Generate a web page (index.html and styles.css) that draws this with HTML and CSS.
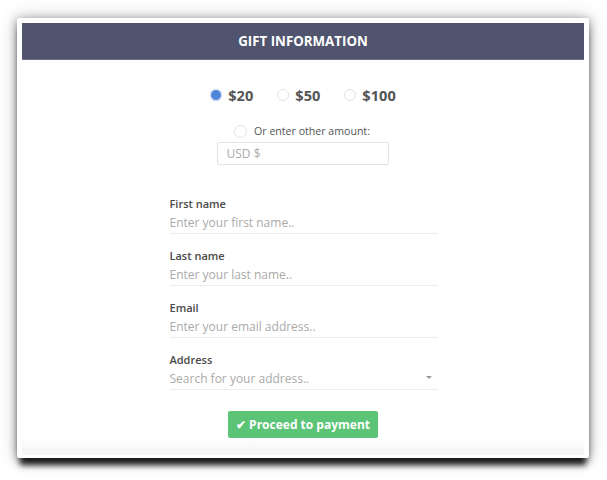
FILE: index.html
```html
<!DOCTYPE html>
<html lang="en">
<head>
  <meta charset="UTF-8" />
  <title>Gift Information</title>
  <link rel="stylesheet" href="styles.css">
</head>
<body>
  <div class="window">
    <div class="panel">
      <div class="panel-header">GIFT INFORMATION</div>

      <div class="amounts">
        <label class="amount"><span class="radio checked"></span>$20</label>
        <label class="amount"><span class="radio"></span>$50</label>
        <label class="amount"><span class="radio"></span>$100</label>
      </div>

      <label class="other"><span class="radio"></span>Or enter other amount:</label>
      <input class="other-input" type="text" placeholder="USD $" />

      <div class="fields">
        <div class="field">
          <label>First name</label>
          <input type="text" placeholder="Enter your first name.." />
        </div>
        <div class="field">
          <label>Last name</label>
          <input type="text" placeholder="Enter your last name.." />
        </div>
        <div class="field">
          <label>Email</label>
          <input type="text" placeholder="Enter your email address.." />
        </div>
        <div class="field select">
          <label>Address</label>
          <input type="text" placeholder="Search for your address.." />
          <span class="caret"></span>
        </div>
      </div>

      <div class="actions">
        <button class="pay">&#10004; Proceed to payment</button>
      </div>
    </div>
  </div>
</body>
</html>
```

FILE: styles.css
```css
html,
body {
  height: 480px;
}

body {
  margin: 0;
  padding-top: 18px;
  box-sizing: border-box;
  background: #fff;
  font-family: "Open Sans", Arial, sans-serif;
  color: #555;
}

/* window with heavy drop shadow */
.window {
  width: 562px;
  height: 432px;
  margin-left: 17px;
  padding: 5px 5px 3px;
  background: #fff;
  border-radius: 2px;
  box-shadow:
    0 10px 6px -3px rgba(0, 0, 0, 0.85),
    0 2px 10px rgba(0, 0, 0, 0.45),
    0 0 20px rgba(0, 0, 0, 0.2);
}

.panel {
  height: 100%;
  background: linear-gradient(to bottom, #fff 0, #fff 414px, #f4f4f4 100%);
  display: flex;
  flex-direction: column;
  align-items: center;
}

.panel-header {
  align-self: stretch;
  height: 37px;
  line-height: 37px;
  background: #50546e;
  border-bottom: 1px solid #6c7088;
  box-sizing: border-box;
  color: #fff;
  font-size: 13.3px;
  font-weight: 700;
  text-align: center;
}

.amounts {
  display: flex;
  gap: 24px;
  margin-top: 25px;
}

.amount {
  display: flex;
  align-items: center;
  font-size: 14.6px;
  font-weight: 700;
  color: #555;
}

.radio {
  width: 12px;
  height: 12px;
  border: 1px solid #e2e2e2;
  border-radius: 50%;
  box-sizing: border-box;
  margin-right: 6px;
  background: #fff;
}

.radio.checked {
  background: #4f86d8;
  border-color: #dfe8f6;
  box-shadow: 0 0 0 1px #eef3fa;
}

.other {
  display: flex;
  align-items: center;
  margin-top: 19px;
  margin-right: 2px;
  font-size: 10.6px;
  color: #555;
}

.other .radio {
  width: 13px;
  height: 13px;
  margin-right: 7px;
}

.other-input {
  width: 172px;
  height: 23px;
  margin-top: 4px;
  margin-right: 1px;
  padding: 0 9px;
  box-sizing: border-box;
  border: 1px solid #e3e3e3;
  border-radius: 2px;
  font-family: inherit;
  font-size: 12px;
  color: #555;
}

input::placeholder {
  color: #aaa;
}

.fields {
  width: 268px;
  margin-top: 31px;
  margin-left: 1px;
  display: flex;
  flex-direction: column;
  gap: 14px;
}

.field {
  position: relative;
  display: flex;
  flex-direction: column;
  border-bottom: 1px solid #ececec;
}

.field label {
  font-size: 11px;
  font-weight: 600;
  color: #4a4a4a;
  line-height: 16px;
}

.field input {
  border: none;
  outline: none;
  padding: 0;
  height: 20px;
  font-family: inherit;
  font-size: 12px;
  color: #555;
  margin-bottom: 1px;
}

.caret {
  position: absolute;
  right: 6px;
  bottom: 10px;
  border-left: 3px solid transparent;
  border-right: 3px solid transparent;
  border-top: 3px solid #999;
}

.actions {
  margin-top: 21px;
}

.pay {
  width: 150px;
  height: 27px;
  background: #5bc476;
  border: none;
  border-radius: 2px;
  color: #fff;
  font-family: inherit;
  font-size: 12px;
  font-weight: 700;
  cursor: pointer;
}
```
